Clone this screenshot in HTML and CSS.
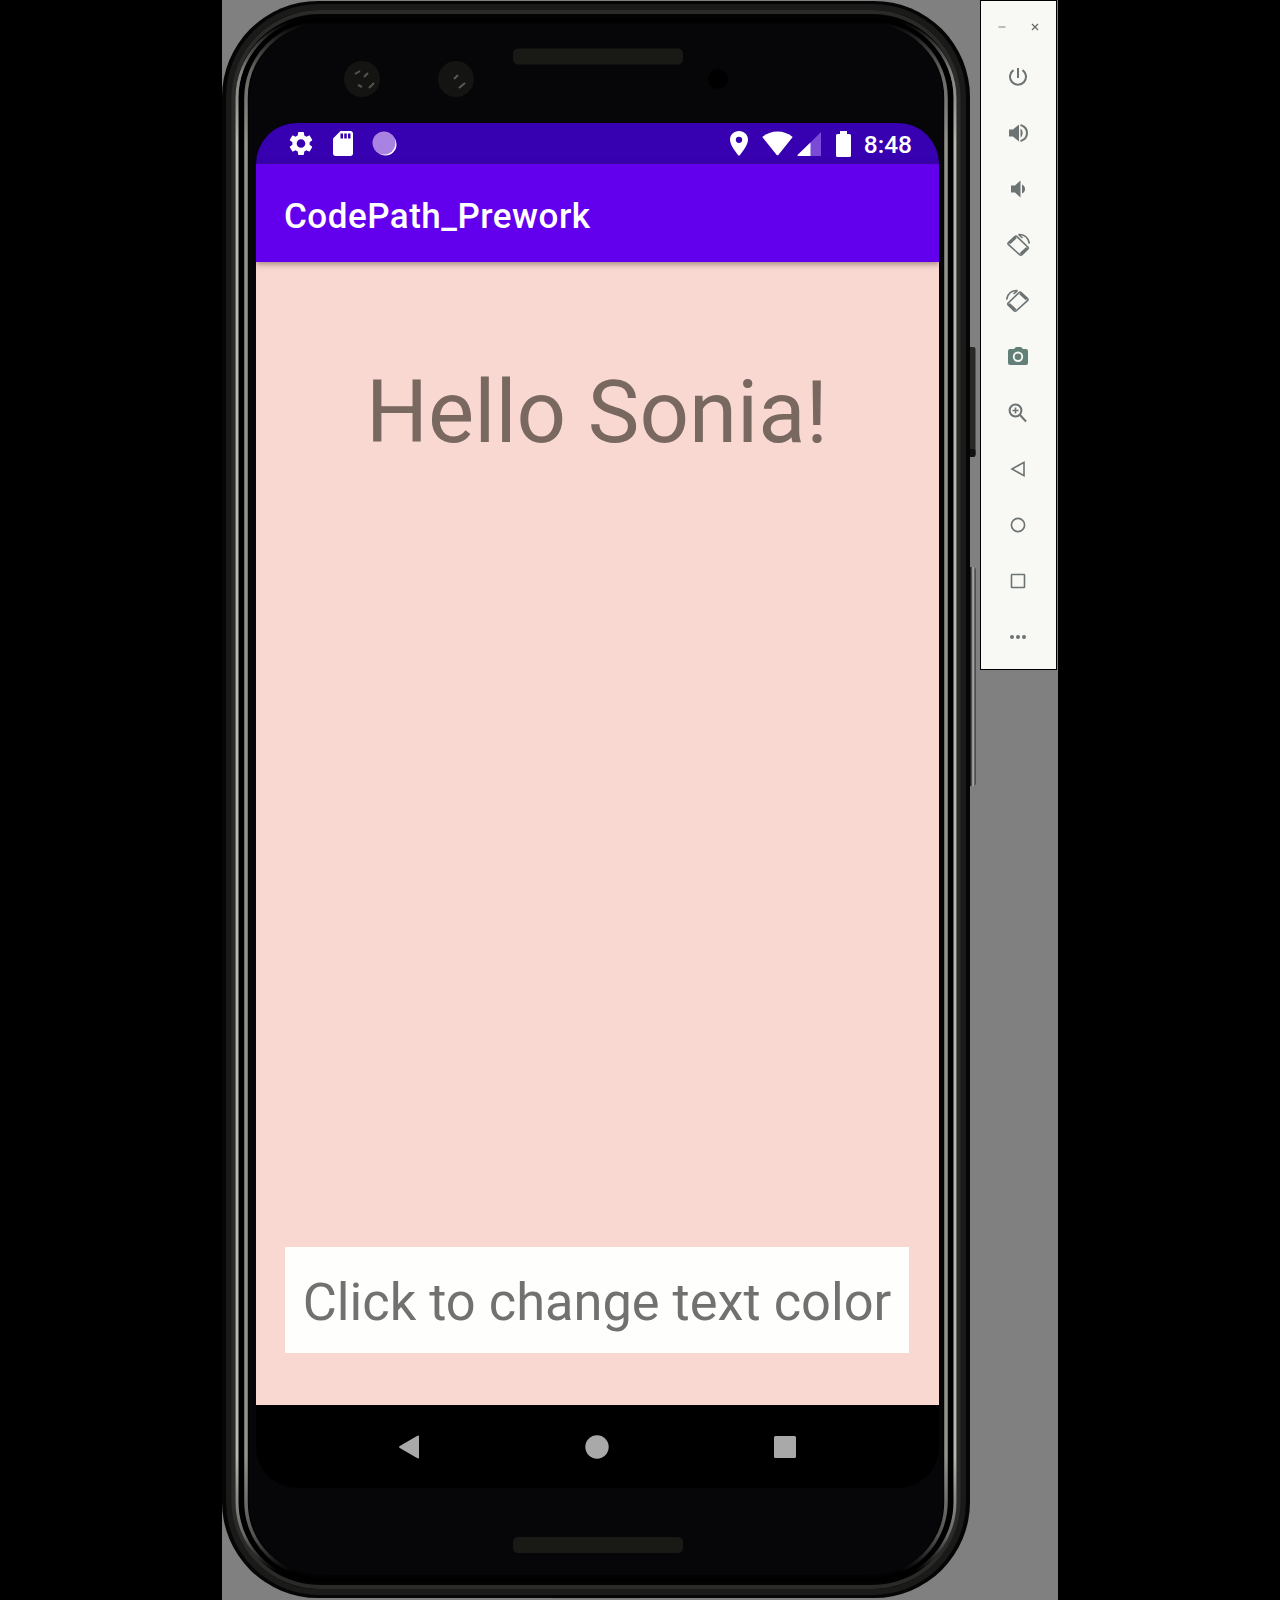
FILE: index.html
```html
<!DOCTYPE html>
<html lang="en">
<head>
<meta charset="utf-8">
<title>CodePath_Prework</title>
<link rel="stylesheet" href="styles.css">
</head>
<body>
<main class="stage">
  <section class="phone">
    <svg class="frame" viewBox="0 0 758 1600" width="758" height="1600" fill="none">
      <defs>
        <linearGradient id="side" x1="0" y1="0" x2="0" y2="1600" gradientUnits="userSpaceOnUse">
          <stop offset="0.014" stop-color="#aaaaa6" stop-opacity="0"/>
          <stop offset="0.045" stop-color="#aaaaa6" stop-opacity=".75"/>
          <stop offset="0.09" stop-color="#b8b8b0"/>
          <stop offset="0.91" stop-color="#b8b8b0"/>
          <stop offset="0.96" stop-color="#aaaaa6" stop-opacity=".6"/>
          <stop offset="0.982" stop-color="#aaaaa6" stop-opacity="0"/>
        </linearGradient>
        <linearGradient id="key" x1="0" x2="1" y1="0" y2="0">
          <stop offset="0" stop-color="#111"/><stop offset=".5" stop-color="#222"/><stop offset=".75" stop-color="#bbb"/><stop offset="1" stop-color="#222"/>
        </linearGradient>
      </defs>
      <rect x="744" y="347" width="9.500" height="109" rx="2" fill="#292925"/>
      <rect x="744" y="449" width="9.500" height="8" rx="2" fill="#111"/>
      <rect x="744" y="567" width="9.500" height="219" rx="2.500" fill="url(#key)"/>
      <rect x="0" y="1" width="748" height="1597" rx="96" fill="#050505"/>
      <rect x="7" y="7" width="734" height="1585" rx="90" stroke="#1a1a19" stroke-width="6"/>
      <rect x="11.500" y="12" width="725" height="1575" rx="86" stroke="#2a2a28" stroke-width="4"/>
      <rect x="14" y="15" width="720" height="1569" rx="82" fill="#020203"/>
      <rect x="15" y="18" width="718" height="1564" rx="80" stroke="url(#side)" stroke-width="3"/>
      <rect x="19" y="20" width="710" height="1560" rx="78" stroke="#000" stroke-width="4"/>
      <rect x="24" y="23" width="700" height="1554" rx="75" stroke="url(#side)" stroke-width="3.500" opacity=".8"/>
      <rect x="27" y="25" width="694" height="1550" rx="72" fill="#060609"/>
      <circle cx="140" cy="79" r="18" fill="#141413"/>
      <path d="M133 74l5-3M142 77l4-4M136 85l4 2M147 88l5-5" stroke="#555550" stroke-width="2"/>
      <circle cx="234" cy="79" r="18" fill="#141413"/>
      <path d="M232 79l4-4M237 88l6-5" stroke="#5a5a55" stroke-width="2"/>
      <rect x="291" y="48.500" width="170" height="16" rx="5" fill="#191916"/>
      <circle cx="496" cy="79" r="10" fill="#000"/>
      <rect x="291" y="1537" width="170" height="16" rx="5" fill="#191916"/>
      <path d="M330 1598.500h88" stroke="#777" stroke-width="1"/>
    </svg>
    <div class="screen">
      <div class="status">
        <svg width="24" height="25" viewBox="2 2 20 20" fill="#fff"><path d="M19.140 12.940c.040-.300.060-.610.060-.940 0-.320-.020-.640-.070-.940l2.030-1.580c.180-.140.230-.410.120-.610l-1.920-3.320c-.120-.220-.370-.290-.590-.220l-2.390.960c-.500-.380-1.030-.700-1.620-.940l-.360-2.540c-.040-.240-.240-.410-.480-.410h-3.840c-.240 0-.430.170-.470.410l-.360 2.540c-.590.240-1.130.570-1.620.940l-2.390-.960c-.220-.080-.470 0-.590.220L2.740 8.870c-.120.210-.080.470.120.610l2.030 1.580c-.050.300-.090.630-.090.940s.020.640.070.940l-2.030 1.580c-.180.140-.230.410-.120.610l1.920 3.320c.120.220.370.290.590.220l2.390-.960c.500.380 1.030.700 1.620.940l.360 2.540c.050.240.240.410.480.410h3.840c.240 0 .440-.170.470-.410l.360-2.540c.590-.240 1.130-.560 1.620-.940l2.390.960c.220.080.470 0 .590-.220l1.920-3.320c.120-.220.070-.470-.120-.610l-2.010-1.580zM12 15.600c-1.980 0-3.600-1.620-3.600-3.600s1.620-3.600 3.600-3.600 3.600 1.620 3.600 3.600-1.620 3.600-3.600 3.600z"/></svg>
        <svg class="sd" width="20" height="25" viewBox="4 2 16 20" fill="#fff"><path d="M18 2h-8L4.020 8 4 20c0 1.100.900 2 2 2h12c1.100 0 2-.900 2-2V4c0-1.100-.900-2-2-2zm-6 6h-2V4h2v4zm3 0h-2V4h2v4zm3 0h-2V4h2v4z"/></svg>
        <svg class="sync" width="25" height="25" viewBox="0 0 25 25"><circle cx="13.500" cy="13.500" r="11" fill="#fff"/><circle cx="12" cy="12" r="11.500" fill="#a983e2"/></svg>
        <span class="spacer"></span>
        <svg class="pin" width="18" height="25" viewBox="5 2 14 20" preserveAspectRatio="none" fill="#fff"><path d="M12 2C8.130 2 5 5.130 5 9c0 5.250 7 13 7 13s7-7.750 7-13c0-3.870-3.130-7-7-7zm0 9.500a2.500 2.500 0 0 1 0-5 2.500 2.500 0 0 1 0 5z"/></svg>
        <svg class="wifi" width="31" height="25" viewBox="0 0 31 25" fill="#fff"><path d="M.300 6Q7 .500 15.500.500T30.700 6L16.500 23.800q-1 1.100-2 0z"/></svg>
        <svg class="cell" width="24" height="25" viewBox="0 0 24 25"><path d="M24 1v24H0z" fill="#7a4bd6"/><path d="M13.500 11.500V25H1.500q-1.800-.300-.500-1.500z" fill="#fff"/></svg>
        <svg class="battery" width="15" height="26" viewBox="0 0 15 26" fill="#fff"><path d="M4 0h7v3h2.500Q15 3 15 4.500v20Q15 26 13.500 26h-12Q0 26 0 24.500v-20Q0 3 1.500 3H4z"/></svg>
        <span class="clock">8:48</span>
      </div>
      <header class="appbar"><h1 class="title">CodePath_Prework</h1></header>
      <div class="content">
        <p class="hello">Hello Sonia!</p>
        <button class="change" type="button">Click to change text color</button>
      </div>
      <nav class="navbar">
        <svg width="24" height="24" viewBox="0 0 24 24" fill="#aaa9a9"><path d="M2.800 10.900 20 .900Q22 0 22 1.500v21q0 1.500-2 .600L2.800 13.100q-1.800-1.100 0-2.200z"/></svg>
        <svg width="24" height="24" viewBox="0 0 24 24" fill="#aaa9a9"><circle cx="12" cy="12" r="11.700"/></svg>
        <svg width="24" height="24" viewBox="0 0 24 24" fill="#aaa9a9"><rect x="1" y="1" width="22" height="22" rx="1.500"/></svg>
      </nav>
    </div>
  </section>
  <aside class="tools">
    <div class="window">
      <svg width="8" height="8" viewBox="0 0 8 8"><path d="M.500 4h7" stroke="#9b9b98" stroke-width="1.300"/></svg>
      <svg width="8" height="8" viewBox="0 0 8 8"><path d="M1 1l6 6M7 1 1 7" stroke="#6a6a68" stroke-width="1.300"/></svg>
    </div>
    <svg class="tool" viewBox="0 0 24 24"><path class="line" d="M12 3v10M7.500 5.100a8 8 0 1 0 9 0"/></svg>
    <svg class="tool" viewBox="0 0 24 24"><path d="M3 8.500v7h4l6 5v-17l-6 5z"/><path d="M14.500 7.600q2.200 1.400 2.200 4.400t-2.200 4.400z"/><path class="line" d="M14.500 4q6.500 2 6.500 8t-6.500 8"/></svg>
    <svg class="tool" viewBox="0 0 24 24"><path d="M5 8.500v7h4l5.500 5v-17L9 8.500zM16 7.500q3 1.500 3 4.500t-3 4.500z"/></svg>
    <svg class="tool" viewBox="0 0 24 24"><g id="rotate" class="thin"><path d="M2.300 9.800 8.900 3.600Q10 2.700 11.200 3.800L21.800 14q1 1 0 2l-5.800 5.700q-1.200 1-2.400 0L2.500 11.700q-1-1-.200-1.900z"/><path class="arc" d="M12.500 1.500Q21.500 1.200 23.400 10.500M12.500 1.500l4 3.500"/><path class="line" d="m3.200 10.200 6.500-6M14.700 21.200l6.500-6"/></g></svg>
    <svg class="tool" viewBox="0 0 24 24"><use href="#rotate" transform="matrix(-1 0 0 1 24 0)"/></svg>
    <svg class="tool camera" viewBox="0 0 24 24"><path fill-rule="evenodd" d="M4 4h4L10 2h5l2 2h3q2 0 2 2v12q0 2-2 2H4q-2 0-2-2V6q0-2 2-2zM12 6.500a5.200 5.200 0 1 0 0 10.400 5.200 5.200 0 0 0 0-10.400zm0 1.900a3.300 3.300 0 1 1 0 6.600 3.300 3.300 0 0 1 0-6.600z"/></svg>
    <svg class="tool" viewBox="0 0 24 24"><circle class="line" cx="9.500" cy="9.500" r="5.900"/><path class="line" d="m14 14 6 6.500"/><path class="thin" d="M9.500 6.500v6M6.500 9.500h6"/></svg>
    <svg class="tool" viewBox="0 0 24 24"><path class="thin" d="M6 12 18 5.300v13.400z"/></svg>
    <svg class="tool" viewBox="0 0 24 24"><circle class="thin" cx="12" cy="12" r="6.600"/></svg>
    <svg class="tool" viewBox="0 0 24 24"><rect class="thin" x="5.500" y="5.500" width="13" height="13" rx=".5"/></svg>
    <svg class="tool" viewBox="0 0 24 24"><circle cx="6" cy="12" r="2"/><circle cx="12" cy="12" r="2"/><circle cx="18" cy="12" r="2"/></svg>
  </aside>
</main>
</body>
</html>
```
FILE: styles.css
```css
* { box-sizing: border-box; }
body { margin: 0; background: #000; font-family: Roboto, sans-serif; }
.stage { display: flex; align-items: flex-start; gap: 10px; width: 836px; height: 1600px; margin-left: 222px; background: #808080; overflow: hidden; }
.phone { position: relative; flex: none; width: 748px; height: 1600px; padding: 123px 31px 0 34px; }
.frame { position: absolute; left: 0; top: 0; }
.screen { position: relative; display: flex; flex-direction: column; width: 683px; height: 1365px; border-radius: 41px; overflow: hidden; background: #000; }
.status { display: flex; align-items: center; flex: none; height: 41px; padding: 0 27px 0 33px; background: #3700b0; }
.status svg { flex: none; }
.sd { margin-left: 20px; }
.sync { margin-left: 19px; }
.spacer { flex: 1; }
.wifi { margin-left: 14px; }
.cell { margin-left: 4px; }
.battery { margin-left: 15px; }
.clock { margin-left: 13px; padding-top: 2px; font-size: 24.500px; font-weight: 500; line-height: 30px; color: #fff; }
.appbar { position: relative; flex: none; height: 98px; padding: 32px 0 0 28px; background: #6200ee; box-shadow: 0 2px 6px rgba(70, 50, 40, .5); }
.title { margin: 0; font-size: 35px; font-weight: 500; line-height: 42px; letter-spacing: .5px; color: #fff; white-space: nowrap; }
.content { flex: none; display: flex; flex-direction: column; align-items: center; justify-content: space-between; height: 1143px; padding: 98px 30px 52px 29px; background: #fad8d2; }
.hello { margin: 0; font-size: 87px; line-height: 104px; color: #786860; white-space: nowrap; }
.change { width: 624px; height: 106px; padding: 3px 0 0; border: 0; background: #fefefc; font: 400 52.400px/60px Roboto, sans-serif; color: #71716f; white-space: nowrap; }
.navbar { flex: 1; display: flex; justify-content: space-between; padding: 30px 142px 0 141px; }
.tools { flex: none; display: flex; flex-direction: column; align-items: center; width: 77px; height: 670px; padding: 22px 2px 0 0; gap: 32px; border: 1px solid #000; background: #f8f8f4; }
.window { display: flex; gap: 25px; height: 8px; margin: 0 0 2px 1px; }
.tool { flex: none; width: 24px; height: 24px; fill: #6c7373; }
.camera { fill: #628078; }
.line { fill: none; stroke: #6c7373; stroke-width: 2; }
.thin, .thin path { fill: none; stroke: #6c7373; stroke-width: 1.600; }
.thin .line { stroke-width: 3; }
```
